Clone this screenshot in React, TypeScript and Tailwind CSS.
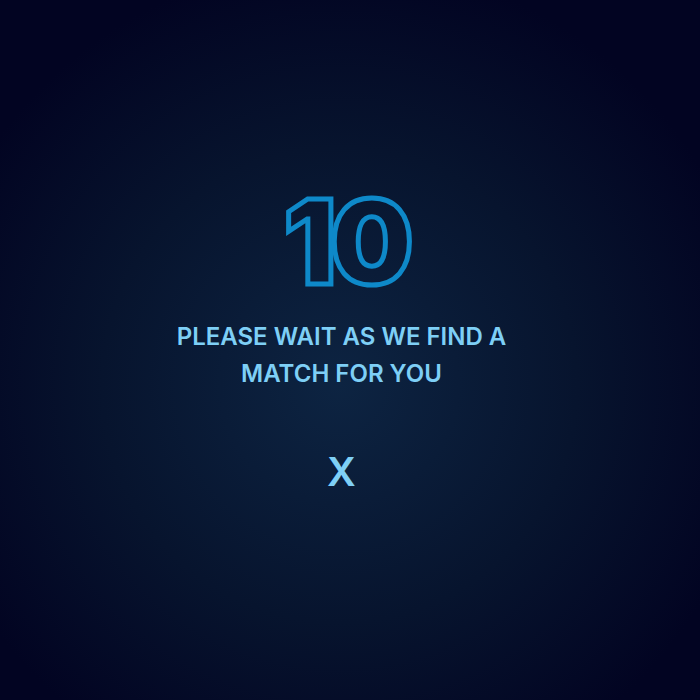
export default function App() {
  return (
    <div className="flex h-screen w-full flex-col items-center justify-center bg-[radial-gradient(circle_at_48.5%_55%,#0d2442_0%,#07142e_45%,#020422_80%)] pb-[26px] pr-[17px] font-['Inter',sans-serif]">
      {/* Countdown */}
      <div className="pl-[8px] text-[117px] font-black leading-none tracking-[-6px] text-transparent [-webkit-text-stroke:5px_#0e89c9]">
        10
      </div>

      {/* Message */}
      <p className="mt-[18px] text-center text-[24px] font-semibold leading-[37px] text-[#7ecff6]">
        PLEASE WAIT AS WE FIND A
        <br />
        MATCH FOR YOU
      </p>

      {/* Cancel */}
      <button className="mt-[60px] text-[40px] font-semibold leading-none text-[#7ecff6]">X</button>
    </div>
  );
}
